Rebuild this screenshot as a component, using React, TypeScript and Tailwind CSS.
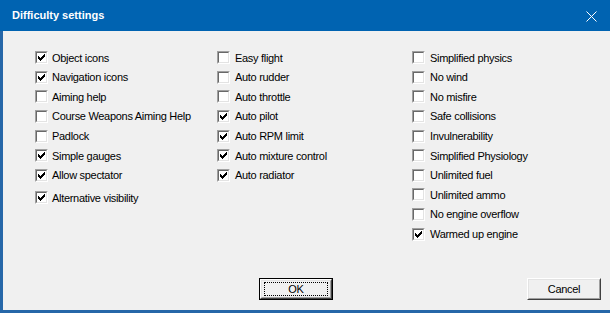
import React from "react";

const col1: [string, boolean][] = [
  ["Object icons", true],
  ["Navigation icons", true],
  ["Aiming help", false],
  ["Course Weapons Aiming Help", false],
  ["Padlock", false],
  ["Simple gauges", true],
  ["Allow spectator", true],
];

const col2: [string, boolean][] = [
  ["Easy flight", false],
  ["Auto rudder", false],
  ["Auto throttle", false],
  ["Auto pilot", true],
  ["Auto RPM limit", true],
  ["Auto mixture control", true],
  ["Auto radiator", true],
];

const col3: [string, boolean][] = [
  ["Simplified physics", false],
  ["No wind", false],
  ["No misfire", false],
  ["Safe collisions", false],
  ["Invulnerability", false],
  ["Simplified Physiology", false],
  ["Unlimited fuel", false],
  ["Unlimited ammo", false],
  ["No engine overflow", false],
  ["Warmed up engine", true],
];

// classic 7x7 check glyph
const CheckMark = () => (
  <svg width="7" height="7" viewBox="0 0 7 7" shapeRendering="crispEdges">
    <rect x="6" y="0" width="1" height="1" fill="#000" />
    <rect x="5" y="1" width="2" height="1" fill="#000" />
    <rect x="0" y="2" width="1" height="1" fill="#000" />
    <rect x="4" y="2" width="3" height="1" fill="#000" />
    <rect x="0" y="3" width="2" height="1" fill="#000" />
    <rect x="3" y="3" width="3" height="1" fill="#000" />
    <rect x="0" y="4" width="5" height="1" fill="#000" />
    <rect x="1" y="5" width="3" height="1" fill="#000" />
    <rect x="2" y="6" width="1" height="1" fill="#000" />
  </svg>
);

const Check = ({ label, checked, gap = "gap-[4px]" }: { label: string; checked: boolean; gap?: string }) => (
  <div className={`h-[19.6px] flex items-center ${gap}`}>
    <span className="w-[13px] h-[13px] shrink-0 border border-t-[#a0a0a0] border-l-[#a0a0a0] border-b-white border-r-white">
      <span className="w-full h-full flex items-center justify-center bg-white border border-t-[#696969] border-l-[#696969] border-b-[#e3e3e3] border-r-[#e3e3e3]">
        {checked && <CheckMark />}
      </span>
    </span>
    <span className="whitespace-nowrap">{label}</span>
  </div>
);

const Button = ({ label, isDefault }: { label: string; isDefault?: boolean }) => (
  <div className={`w-[74px] h-[22px] ${isDefault ? "border border-black" : ""}`}>
    <div className="w-full h-full border border-t-white border-l-white border-b-[#404040] border-r-[#404040]">
      <div className="w-full h-full flex items-center justify-center border border-t-[#e3e3e3] border-l-[#e3e3e3] border-b-[#a0a0a0] border-r-[#a0a0a0]">
        {isDefault ? (
          <div className="w-[64px] h-[14px] flex items-center justify-center border border-dotted border-black">
            {label}
          </div>
        ) : (
          label
        )}
      </div>
    </div>
  </div>
);

export default function App() {
  return (
    <div
      className="w-[610px] h-[313px] bg-[#f0f0f0] flex flex-col overflow-hidden text-[11px] tracking-[-0.3px] text-black"
      style={{ fontFamily: '"Liberation Sans", Arial, sans-serif' }}
    >
      <div className="h-[31px] shrink-0 bg-[#0063b1] flex items-center justify-between pl-[12px] pr-[13px]">
        <span className="text-white font-bold text-[11px] tracking-normal">Difficulty settings</span>
        <svg width="11" height="11" viewBox="0 0 11 11" className="mt-[1px]">
          <path d="M0.5 0.5 L10.5 10.5 M10.5 0.5 L0.5 10.5" stroke="#fff" strokeWidth="1" />
        </svg>
      </div>
      <div className="flex-1 flex flex-col border-l-[3px] border-b-[3px] border-[#2667a8]">
        <div className="flex pl-[32px] pt-[17px]">
          <div className="w-[182px] flex flex-col">
            {col1.map(([l, c]) => (
              <Check key={l} label={l} checked={c} />
            ))}
            <div className="mt-[3px]">
              <Check label="Alternative visibility" checked />
            </div>
          </div>
          <div className="w-[195px] flex flex-col">
            {col2.map(([l, c]) => (
              <Check key={l} label={l} checked={c} gap="gap-[5px]" />
            ))}
          </div>
          <div className="flex flex-col">
            {col3.map(([l, c]) => (
              <Check key={l} label={l} checked={c} gap="gap-[5px]" />
            ))}
          </div>
        </div>
        <div className="mt-auto flex pl-[256px] gap-[194px] pb-[10px]">
          <Button label="OK" isDefault />
          <Button label="Cancel" />
        </div>
      </div>
    </div>
  );
}
